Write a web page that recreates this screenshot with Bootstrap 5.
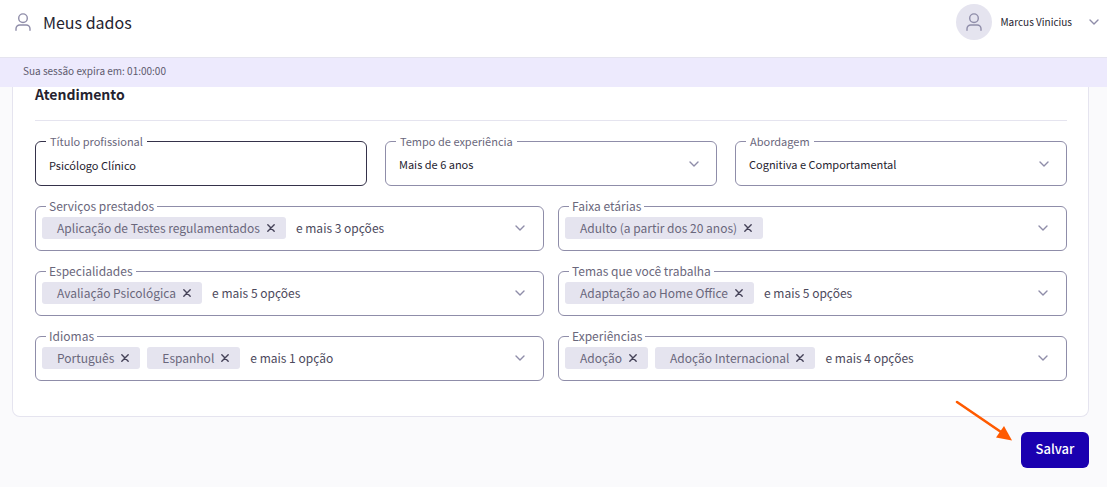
<!DOCTYPE html>
<html lang="pt-BR">
<head>
<meta charset="utf-8">
<meta name="viewport" content="width=device-width, initial-scale=1">
<title>Meus dados</title>
<link href="https://cdn.jsdelivr.net/npm/bootstrap@5.3.0/dist/css/bootstrap.min.css" rel="stylesheet">
<style>
  :root { --ink: #25232f; --muted: #6a677c; --line: #8f8da9; --soft: #e5e4ef; --brand: #1a00b0; }
  body { background: #fafafc; color: var(--ink); font-family: "Noto Sans CJK SC", "Noto Sans", sans-serif; font-size: 12px; line-height: 18px; }
  .topbar { height: 57px; padding: 0 7px 13px 11px; }
  .topbar h1 { font-size: 16px; line-height: 24px; font-weight: 400; padding-bottom: 1px; }
  .avatar { width: 36px; height: 36px; background: var(--soft); }
  .user-toggle { font-size: 10px; color: #55526a; }
  .session { height: 30px; padding: 0 23px 3px; background: #edeafd; border-top: 1px solid var(--soft); color: #5d5a6e; font-size: 10px; }
  .panel { margin: 0 18px 0 12px; padding: 0 21px 35px 22px; border: 1px solid var(--soft); border-top: 0; border-radius: 0 0 8px 8px; }
  .panel h2 { font-size: 14px; line-height: 15px; font-weight: 700; padding-bottom: 18px; margin-bottom: 20px; border-bottom: 1px solid var(--soft); }
  .gap-fields { gap: 20px; }
  .trio { display: grid; grid-template-columns: repeat(3, 1fr); gap: 18px; }
  .duo { display: grid; grid-template-columns: repeat(2, 1fr); gap: 20px 14px; }
  .field { position: relative; min-width: 0; }
  .field-label { position: absolute; top: -9px; left: 11px; padding: 0 4px; background: #fff; color: var(--muted); font-size: 11px; line-height: 18px; white-space: nowrap; }
  .duo .field-label { padding: 0 3px; font-size: 12px; }
  .field .form-control, .field .form-select, .box { height: 45px; border: 1px solid var(--line); border-radius: 6px; background-color: #fff; color: var(--ink); font-size: 11px; }
  .field .form-control, .field .form-select { padding: 2px 13px 0; }
  .field .form-control { border-color: #35324a; }
  .field .form-select { background-image: url("data:image/svg+xml,%3Csvg xmlns='http://www.w3.org/2000/svg' viewBox='0 0 12 12'%3E%3Cpath d='M2 4l4 4 4-4' fill='none' stroke='%238f8da9' stroke-width='1.4' stroke-linecap='round' stroke-linejoin='round'/%3E%3C/svg%3E"); background-size: 12px 12px; background-position: right 16px center; }
  .field .box { padding: 0 17px 2px 6px; font-size: 12px; }
  .chip { height: 22px; padding: 0 10px 0 15px; gap: 6px; border-radius: 3px; background: var(--soft); color: var(--muted); white-space: nowrap; }
  .chip + .chip { margin-left: 7px; }
  .more { margin-left: 10px; color: #4c495c; white-space: nowrap; }
  .plain { border: 0; background: none; padding: 0; color: inherit; display: flex; align-items: center; }
  .ico { fill: none; stroke: var(--line); stroke-width: 1.4; stroke-linecap: round; stroke-linejoin: round; display: block; flex: none; }
  .chip .ico { stroke: #454258; }
  .actions { margin: 15px 18px 19px 12px; }
  .btn-save { --bs-btn-color: #fff; --bs-btn-bg: var(--brand); --bs-btn-hover-color: #fff; --bs-btn-hover-bg: #14008c; width: 68px; height: 36px; padding: 0 0 2px; border: 0; border-radius: 6px; font-size: 13px; font-weight: 500; }
  .pointer { position: absolute; right: 75px; top: -34px; }
</style>
</head>
<body>
<svg class="d-none" aria-hidden="true">
  <symbol id="user" viewBox="0 0 16 18"><circle cx="8" cy="5.2" r="4.3"/><path d="M1 17.200v-1.400a3.800 3.800 0 0 1 3.800-3.800h6.400a3.800 3.800 0 0 1 3.800 3.800v1.400"/></symbol>
  <symbol id="down" viewBox="0 0 12 12"><path d="M2 4l4 4 4-4"/></symbol>
  <symbol id="close" viewBox="0 0 10 10"><path d="M1.800 1.800l6.400 6.400M8.200 1.800l-6.400 6.400"/></symbol>
</svg>

<header class="topbar bg-white d-flex align-items-center justify-content-between">
  <div class="d-flex align-items-center">
    <svg class="ico ms-1" width="16" height="18"><use href="#user"/></svg>
    <h1 class="mb-0 ms-2 ps-1">Meus dados</h1>
  </div>
  <button type="button" class="plain user-toggle">
    <span class="avatar rounded-circle d-flex align-items-center justify-content-center me-2"><svg class="ico" width="16" height="18"><use href="#user"/></svg></span>
    <span>Marcus Vinicius</span>
    <svg class="ico ms-3" width="12" height="12"><use href="#down"/></svg>
  </button>
</header>
<div class="session d-flex align-items-center">Sua sessão expira em: 01:00:00</div>

<main>
  <form>
    <section class="panel bg-white">
      <h2>Atendimento</h2>
      <div class="d-flex flex-column gap-fields">
        <div class="trio">
          <div class="field">
            <input class="form-control" id="titulo" type="text" value="Psicólogo Clínico">
            <label class="field-label" for="titulo">Título profissional</label>
          </div>
          <div class="field">
            <select class="form-select" id="tempo"><option>Mais de 6 anos</option></select>
            <label class="field-label" for="tempo">Tempo de experiência</label>
          </div>
          <div class="field">
            <select class="form-select" id="abordagem"><option>Cognitiva e Comportamental</option></select>
            <label class="field-label" for="abordagem">Abordagem</label>
          </div>
        </div>
        <div class="duo">
          <div class="field">
            <div class="box d-flex align-items-center">
              <span class="chip d-flex align-items-center">Aplicação de Testes regulamentados<button type="button" class="plain" aria-label="Remover"><svg class="ico" width="10" height="10"><use href="#close"/></svg></button></span>
              <span class="more">e mais 3 opções</span>
              <button type="button" class="plain ms-auto" id="servicos"><svg class="ico" width="12" height="12"><use href="#down"/></svg></button>
            </div>
            <label class="field-label" for="servicos">Serviços prestados</label>
          </div>
          <div class="field">
            <div class="box d-flex align-items-center">
              <span class="chip d-flex align-items-center">Adulto (a partir dos 20 anos)<button type="button" class="plain" aria-label="Remover"><svg class="ico" width="10" height="10"><use href="#close"/></svg></button></span>
              <button type="button" class="plain ms-auto" id="faixa"><svg class="ico" width="12" height="12"><use href="#down"/></svg></button>
            </div>
            <label class="field-label" for="faixa">Faixa etárias</label>
          </div>
          <div class="field">
            <div class="box d-flex align-items-center">
              <span class="chip d-flex align-items-center">Avaliação Psicológica<button type="button" class="plain" aria-label="Remover"><svg class="ico" width="10" height="10"><use href="#close"/></svg></button></span>
              <span class="more">e mais 5 opções</span>
              <button type="button" class="plain ms-auto" id="especialidades"><svg class="ico" width="12" height="12"><use href="#down"/></svg></button>
            </div>
            <label class="field-label" for="especialidades">Especialidades</label>
          </div>
          <div class="field">
            <div class="box d-flex align-items-center">
              <span class="chip d-flex align-items-center">Adaptação ao Home Office<button type="button" class="plain" aria-label="Remover"><svg class="ico" width="10" height="10"><use href="#close"/></svg></button></span>
              <span class="more">e mais 5 opções</span>
              <button type="button" class="plain ms-auto" id="temas"><svg class="ico" width="12" height="12"><use href="#down"/></svg></button>
            </div>
            <label class="field-label" for="temas">Temas que você trabalha</label>
          </div>
          <div class="field">
            <div class="box d-flex align-items-center">
              <span class="chip d-flex align-items-center">Português<button type="button" class="plain" aria-label="Remover"><svg class="ico" width="10" height="10"><use href="#close"/></svg></button></span>
              <span class="chip d-flex align-items-center">Espanhol<button type="button" class="plain" aria-label="Remover"><svg class="ico" width="10" height="10"><use href="#close"/></svg></button></span>
              <span class="more">e mais 1 opção</span>
              <button type="button" class="plain ms-auto" id="idiomas"><svg class="ico" width="12" height="12"><use href="#down"/></svg></button>
            </div>
            <label class="field-label" for="idiomas">Idiomas</label>
          </div>
          <div class="field">
            <div class="box d-flex align-items-center">
              <span class="chip d-flex align-items-center">Adoção<button type="button" class="plain" aria-label="Remover"><svg class="ico" width="10" height="10"><use href="#close"/></svg></button></span>
              <span class="chip d-flex align-items-center">Adoção Internacional<button type="button" class="plain" aria-label="Remover"><svg class="ico" width="10" height="10"><use href="#close"/></svg></button></span>
              <span class="more">e mais 4 opções</span>
              <button type="button" class="plain ms-auto" id="experiencias"><svg class="ico" width="12" height="12"><use href="#down"/></svg></button>
            </div>
            <label class="field-label" for="experiencias">Experiências</label>
          </div>
        </div>
      </div>
    </section>
    <div class="actions position-relative d-flex justify-content-end">
      <svg class="pointer" width="60" height="46" viewBox="0 0 60 46" aria-hidden="true"><path d="M3 4L47 34" stroke="#ff5a00" stroke-width="2.6" stroke-linecap="round"/><path d="M58 42.500L42 39.500L50 28z" fill="#ff5a00"/></svg>
      <button type="submit" class="btn btn-save">Salvar</button>
    </div>
  </form>
</main>
<script src="https://cdn.jsdelivr.net/npm/bootstrap@5.3.0/dist/js/bootstrap.bundle.min.js"></script>
</body>
</html>
